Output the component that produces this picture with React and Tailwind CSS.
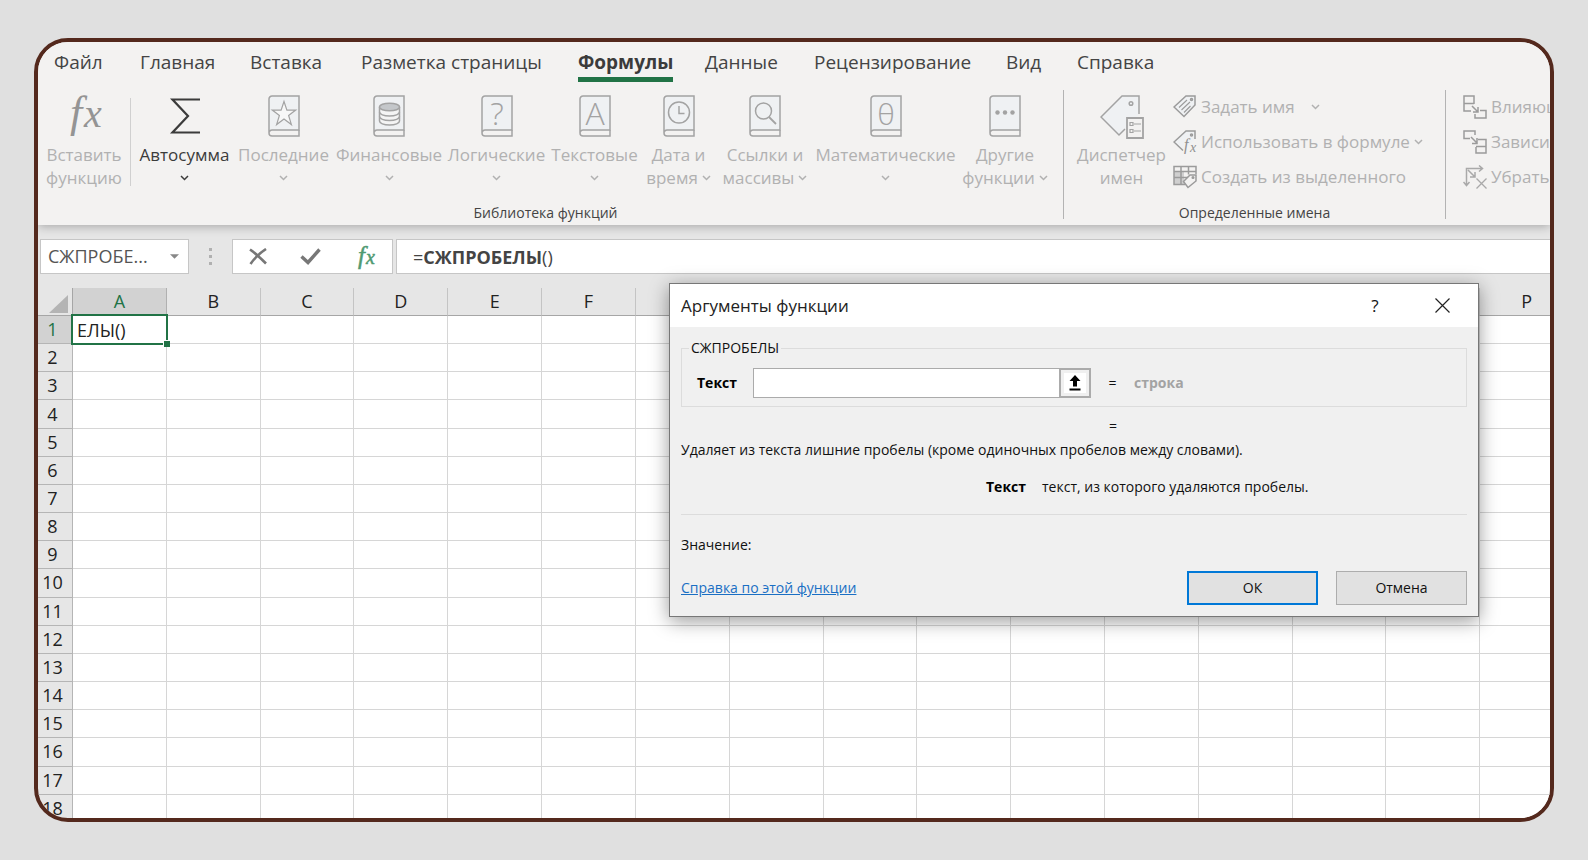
import React from 'react';

// Ribbon tabs
const TABS = [
  { label: 'Файл', width: 'w-[86px]' },
  { label: 'Главная', width: 'w-[110px]' },
  { label: 'Вставка', width: 'w-[111px]' },
  { label: 'Разметка страницы', width: 'w-[217px]' },
  { label: 'Формулы', width: 'w-[127px]', active: true },
  { label: 'Данные', width: 'w-[109px]' },
  { label: 'Рецензирование', width: 'w-[192px]' },
  { label: 'Вид', width: 'w-[71px]' },
  { label: 'Справка', width: 'w-[90px]' },
];

const COLUMNS = 'ABCDEFGHIJKLMNOP'.split('');
const ROWS = Array.from({ length: 18 }, (_, i) => i + 1);

const Chevron = ({ className = '' }) => (
  <svg className={`inline-block shrink-0 ${className}`} width="9" height="6" viewBox="0 0 9 6" fill="none" stroke="currentColor" strokeWidth="1.5">
    <path d="M1 1l3.5 3.5L8 1" />
  </svg>
);

// Closed book with a symbol on its cover
const BookIcon = ({ children }) => (
  <svg width="32" height="42" viewBox="0 0 32 42" fill="none" stroke="#a3a3a3" strokeWidth="1.5">
    <path d="M4 1h27v34H4a3 3 0 0 0-3 3V4a3 3 0 0 1 3-3z" fill="#eff1f3" />
    <path d="M1 38a3 3 0 0 0 3 3h27v-6" />
    {children}
  </svg>
);

const GlyphText = ({ size = 32, children }) => (
  <text x="16" y="30" textAnchor="middle" fontSize={size} fontFamily="Open Sans, sans-serif" fontWeight="300" fill="#a3a3a3" stroke="none">
    {children}
  </text>
);

const FxIcon = () => (
  <svg width="40" height="42" viewBox="0 0 40 42" overflow="visible" fontStyle="italic" fontFamily="Liberation Serif, serif" fill="#949494">
    <text x="6" y="32" fontSize="44">f</text>
    <text x="20" y="32" fontSize="40">x</text>
  </svg>
);

const SigmaIcon = () => (
  <svg width="32" height="42" viewBox="0 0 32 42" fill="none" stroke="#3b3b3b" strokeWidth="2.2">
    <path d="M31 4.500H3.500L19 21 3.500 37.500H31" />
  </svg>
);

const StarIcon = () => (
  <BookIcon>
    <path d="M16 6.500l2.900 8.600h8.800l-7.100 5.300 2.800 9.200-7.400-5.500-7.400 5.500 2.800-9.200-7.100-5.300h8.800z" fill="#f7f7f7" strokeWidth="1.2" />
  </BookIcon>
);

const CoinsIcon = () => (
  <BookIcon>
    <path d="M6.500 12v14c0 2.200 4.200 4 10 4s10-1.800 10-4V12" fill="#f4f4f4" />
    <ellipse cx="16.500" cy="12" rx="10" ry="3.800" fill="#c4c7ca" />
    <path d="M6.500 17c0 2.200 4.200 4 10 4s10-1.800 10-4M6.500 21.500c0 2.200 4.200 4 10 4s10-1.800 10-4" />
  </BookIcon>
);

const ClockIcon = () => (
  <BookIcon>
    <circle cx="16" cy="17.500" r="10.500" />
    <path d="M16 11v7.500h5.500" />
  </BookIcon>
);

const SearchIcon = () => (
  <BookIcon>
    <circle cx="14.500" cy="16" r="8" />
    <path d="M20 22l7 7" strokeWidth="1.800" />
  </BookIcon>
);

const DotsIcon = () => (
  <BookIcon>
    <g fill="#a3a3a3" stroke="none">
      <circle cx="8.500" cy="17.500" r="2.200" />
      <circle cx="16" cy="17.500" r="2.200" />
      <circle cx="23.500" cy="17.500" r="2.200" />
    </g>
  </BookIcon>
);

const NameManagerIcon = () => (
  <svg width="44" height="44" viewBox="0 0 44 44" fill="none" stroke="#a3a3a3" strokeWidth="1.5">
    <path d="M39 19V1H22L1 22l18 18 6-6" fill="#eff1f3" />
    <circle cx="31" cy="8.500" r="1.800" />
    <path d="M27 23h16v20H27z" fill="#f3f2f1" strokeWidth="1.800" />
    <path d="M30 27.500h3v3h-3zM30 34.500h3v3h-3zM34 29h7M34 36h7" strokeWidth="1.200" />
  </svg>
);

const SmallIcon = ({ children }) => (
  <svg className="shrink-0" width="24" height="24" viewBox="0 0 24 24" fill="none" stroke="#9b9b9b" strokeWidth="1.5">
    {children}
  </svg>
);

const TagIcon = () => (
  <SmallIcon>
    <path d="M1 12L13 1h9v9L11 21.500z" fill="#eff1f3" />
    <circle cx="18.500" cy="4.500" r="1" />
    <path d="M6 12.500l8-7.500M8.500 15l8.500-8M11 17.500l6.500-6.500" strokeWidth="1.100" />
  </SmallIcon>
);

const TagFxIcon = () => (
  <SmallIcon>
    <path d="M22 9V1h-9L1 12l9 8.500" fill="#eff1f3" />
    <circle cx="18.500" cy="5" r="1" />
    <g fontStyle="italic" fontFamily="Liberation Serif, serif" fill="#8f8f8f" stroke="none">
      <text x="11" y="20" fontSize="16">f</text>
      <text x="17" y="22" fontSize="14">x</text>
    </g>
  </SmallIcon>
);

const TableTagIcon = () => (
  <SmallIcon>
    <path d="M1 7h10v12H1z" fill="#cfcfcf" stroke="none" />
    <path d="M1 1.500h22v5H1zM1 6.500v13h11M1 12.500h14M8 1.500v18M15.500 1.500v8M23 6v3" />
    <path d="M10.500 16.500L17 10h6v6l-8 6.500z" fill="#f3f2f1" />
    <circle cx="20" cy="12.500" r=".8" />
  </SmallIcon>
);

const PrecedentsIcon = () => (
  <SmallIcon>
    <path d="M8 16H1V1h10v8M1 8.500h10M17 15.500h6V23H12v-4M9 11l6 6M15 12v5h-5" />
  </SmallIcon>
);

const DependentsIcon = () => (
  <SmallIcon>
    <path d="M7 8.500H1V1h11v4M15 9.500h8V23H13v-6M13 16.500h10M8 7l6 6M14 8v5.500H9" />
  </SmallIcon>
);

const RemoveArrowsIcon = () => (
  <SmallIcon>
    <path d="M3.500 20V3.500H19M16 .5l3.500 3L16 6.500M.5 17l3 3.500 3-3.500M5 5l7 7M12 7v5H7" stroke="#a9a9a9" />
    <path d="M13.500 13.500l10 10M23.500 13.500l-10 10" stroke="#a9a9a9" strokeWidth="1.300" />
  </SmallIcon>
);

// Function library buttons
const LIBRARY = [
  { lines: ['Автосумма'], icon: <SigmaIcon />, width: 'w-[99px]', enabled: true },
  { lines: ['Последние'], icon: <StarIcon />, width: 'w-[99px]' },
  { lines: ['Финансовые'], icon: <CoinsIcon />, width: 'w-[112px]' },
  { lines: ['Логические'], icon: <BookIcon><GlyphText>?</GlyphText></BookIcon>, width: 'w-[103px]' },
  { lines: ['Текстовые'], icon: <BookIcon><GlyphText>A</GlyphText></BookIcon>, width: 'w-[93px]' },
  { lines: ['Дата и', 'время'], icon: <ClockIcon />, width: 'w-[75px]' },
  { lines: ['Ссылки и', 'массивы'], icon: <SearchIcon />, width: 'w-[98px]' },
  { lines: ['Математические'], icon: <BookIcon><GlyphText size={30}>θ</GlyphText></BookIcon>, width: 'w-[143px]' },
  { lines: ['Другие', 'функции'], icon: <DotsIcon />, width: 'w-[96px]' },
];

const BigButton = ({ lines, icon, width, enabled, hasMenu = true }) => (
  <button
    className={`
      flex shrink-0 flex-col items-center whitespace-nowrap pt-[11px] text-[17px] leading-[23px]
      ${width} ${enabled ? 'text-[#3b3b3b]' : 'text-[#b1b1b1]'}
    `}
  >
    <span className="flex h-[42px]">{icon}</span>
    <span className="mt-[6px]">{lines[0]}</span>
    <span className="flex h-[23px] items-center gap-1">
      {lines[1]}
      {hasMenu && <Chevron />}
    </span>
  </button>
);

const SmallButton = ({ icon, label, hasMenu, menuGap = '' }) => (
  <button className="flex h-[35px] items-center gap-1 whitespace-nowrap text-[17px] text-[#b1b1b1]">
    {icon}
    <span>{label}</span>
    {hasMenu && <Chevron className={menuGap} />}
  </button>
);

const RibbonGroup = ({ title, className = '', children }) => (
  <div className={`flex shrink-0 flex-col justify-between ${className}`}>
    <div className="flex">{children}</div>
    <div className="mb-[2px] text-center text-[14px] leading-5 text-[#444]">{title}</div>
  </div>
);

const GroupDivider = () => <div className="mt-[6px] mb-[6px] w-px shrink-0 bg-[#b3b3b3]" />;

const Ribbon = () => (
  <header className="relative z-10 shrink-0 bg-[#f3f2f1] shadow-[0_1px_10px_rgba(0,0,0,0.3)]">
    <nav className="flex h-[42px] pl-[16px] text-[19px] text-[#444]">
      {TABS.map(tab => (
        <div key={tab.label} className={`shrink-0 ${tab.width}`}>
          <button
            className={`
              h-[40px] whitespace-nowrap
              ${tab.active ? 'border-b-[5px] border-[#217346] pt-[5px] font-bold text-[#3b3b3b]' : ''}
            `}
          >
            {tab.label}
          </button>
        </div>
      ))}
    </nav>
    <div className="flex h-[141px]">
      <RibbonGroup title="Библиотека функций" className="pr-[10px]">
        <BigButton lines={['Вставить', 'функцию']} icon={<FxIcon />} width="w-[92px]" hasMenu={false} />
        <div className="mt-[14px] mr-1 h-[88px] w-px shrink-0 bg-[#d0d0d0]" />
        {LIBRARY.map(item => <BigButton key={item.lines[0]} {...item} />)}
      </RibbonGroup>
      <GroupDivider />
      <RibbonGroup title="Определенные имена" className="w-[381px]">
        <div className="flex pl-[6px]">
          <BigButton lines={['Диспетчер', 'имен']} icon={<NameManagerIcon />} width="w-[103px]" hasMenu={false} />
          <div className="flex flex-col pt-[5px]">
            <SmallButton icon={<TagIcon />} label="Задать имя" hasMenu menuGap="ml-3" />
            <SmallButton icon={<TagFxIcon />} label="Использовать в формуле" hasMenu />
            <SmallButton icon={<TableTagIcon />} label="Создать из выделенного" />
          </div>
        </div>
      </RibbonGroup>
      <GroupDivider />
      <div className="flex flex-col pt-[5px] pl-[17px]">
        <SmallButton icon={<PrecedentsIcon />} label="Влияющие ячейки" />
        <SmallButton icon={<DependentsIcon />} label="Зависимые ячейки" />
        <SmallButton icon={<RemoveArrowsIcon />} label="Убрать стрелки" />
      </div>
    </div>
  </header>
);

const FormulaBar = () => (
  <div className="flex h-[49px] shrink-0 items-end text-[18px] text-[#444]">
    <div className="relative ml-[2px] w-[149px]">
      <select
        aria-label="Имя"
        className="h-[35px] w-full appearance-none border border-[#c6c6c6] bg-white pl-[7px] text-[#555] outline-none"
      >
        <option>СЖПРОБЕ...</option>
      </select>
      <svg className="pointer-events-none absolute top-[15px] right-[10px]" width="9" height="5" viewBox="0 0 10 5" fill="#888">
        <path d="M0 0h10L5 5z" />
      </svg>
    </div>
    <div className="flex h-[35px] w-[43px] flex-col items-center justify-center gap-1">
      <i className="size-[3px] bg-[#b0b0b0]" />
      <i className="size-[3px] bg-[#b0b0b0]" />
      <i className="size-[3px] bg-[#b0b0b0]" />
    </div>
    <div className="flex h-[35px] w-[161px] items-center justify-around border border-[#c6c6c6] bg-white">
      <button aria-label="Отмена ввода">
        <svg width="19" height="17" viewBox="0 0 19 17" fill="none" stroke="#777" strokeWidth="2.600">
          <path d="M1 1.500c5 3.500 10.500 8.500 16 14M17 1C11 5 5.500 10 1.500 16" />
        </svg>
      </button>
      <button aria-label="Ввод">
        <svg width="21" height="17" viewBox="0 0 21 17" fill="none" stroke="#777" strokeWidth="3.400">
          <path d="M1.500 8.500L8 14.500 19.500 1.500" />
        </svg>
      </button>
      <button aria-label="Вставить функцию">
        <svg width="22" height="26" viewBox="0 0 22 26" fontStyle="italic" fontFamily="Liberation Serif, serif" fill="#4f9a72" stroke="#4f9a72" strokeWidth=".5">
          <text x="4" y="20" fontSize="25">f</text>
          <text x="12" y="20" fontSize="20">x</text>
        </svg>
      </button>
    </div>
    <div
      role="textbox"
      aria-label="Строка формул"
      contentEditable
      suppressContentEditableWarning
      className="ml-[3px] h-[35px] flex-1 border-y border-l border-[#c6c6c6] bg-white pl-[16px] leading-[34px] outline-none"
    >
      =<b>СЖПРОБЕЛЫ</b>()
    </div>
  </div>
);

const Sheet = () => (
  <div className="mt-[14px] min-h-0 flex-1 overflow-hidden">
    <table className="h-[535px] w-[1536px] table-fixed border-separate border-spacing-0 text-[18px] text-[#222]">
      <thead>
        <tr className="h-[28px]">
          <th className="w-[35px] border-r border-b border-[#a6a6a6] p-0">
            <svg className="mt-1 mr-1 ml-auto" width="19" height="18" viewBox="0 0 19 18" fill="#b4b4b4">
              <path d="M19 0v18H0z" />
            </svg>
          </th>
          {COLUMNS.map(col => (
            <th
              key={col}
              className={`
                border-r border-b p-0 font-normal leading-[27px]
                ${col === 'A' ? 'border-r-[#b0b0b0] border-b-[#217346] bg-[#d2d2d2] text-[#217346]' : 'border-r-[#c4c4c4] border-b-[#a6a6a6]'}
              `}
            >
              {col}
            </th>
          ))}
        </tr>
      </thead>
      <tbody>
        {ROWS.map(row => (
          <tr key={row}>
            <th
              className={`
                border-r border-b border-[#b5b5b5] p-0 pr-[5px] font-normal leading-[27px]
                ${row === 1 ? 'bg-[#d2d2d2] text-[#217346]' : ''}
              `}
            >
              {row}
            </th>
            {COLUMNS.map(col => (
              <td key={col} className="relative border-r border-b border-[#d6d6d6] bg-white p-0 leading-[27px]">
                {row === 1 && col === 'A' && (
                  <div className="absolute -inset-[2px] z-10 border-2 border-[#217346] bg-white pl-[4px] leading-[28px]">
                    ЕЛЫ()
                    <i className="absolute -right-[4px] -bottom-[4px] size-[7px] border-t border-l border-white bg-[#217346]" />
                  </div>
                )}
              </td>
            ))}
          </tr>
        ))}
      </tbody>
    </table>
  </div>
);

const ArgumentsDialog = () => (
  <div
    role="dialog"
    aria-label="Аргументы функции"
    className="absolute top-[241px] left-[631px] z-20 w-[810px] border border-[#777] bg-[#f0f0f0] text-[14px] leading-5 text-[#111] shadow-[0_4px_18px_rgba(0,0,0,0.4)]"
  >
    <div className="flex h-[43px] items-center bg-white pl-[11px]">
      <h2 className="flex-1 text-[17px] text-[#222]">Аргументы функции</h2>
      <button aria-label="Помощь" className="w-[62px] text-[17px]">?</button>
      <button aria-label="Закрыть" className="flex w-[72px] justify-center">
        <svg width="15" height="15" viewBox="0 0 15 15" stroke="#222" strokeWidth="1.200">
          <path d="M.5.500l14 14M14.500.500l-14 14" />
        </svg>
      </button>
    </div>
    <div className="px-[11px] pt-[11px] pb-[11px]">
      <fieldset className="h-[69px] border border-[#dcdcdc] pl-[15px]">
        <legend className="-ml-[8px] px-[2px]">СЖПРОБЕЛЫ</legend>
        <div className="flex items-center pt-[10px]">
          <label htmlFor="arg-text" className="w-[56px] font-bold text-black">Текст</label>
          <div className="flex h-[30px] w-[338px]">
            <input id="arg-text" type="text" className="min-w-0 flex-1 border border-r-0 border-[#ababab] bg-white px-1 outline-none" />
            <button aria-label="Свернуть" className="flex w-[32px] items-center justify-center border-2 border-[#ababab] bg-[#f0f0f0] p-[3px]">
              <span className="flex h-full w-full items-center justify-center bg-white">
                <svg width="12" height="16" viewBox="0 0 12 16">
                  <path d="M6 0l5.500 6H8v5.500H4V6H.5zM.5 13.500h11v2H.5z" fill="#000" />
                </svg>
              </span>
            </button>
          </div>
          <span className="w-[43px] text-center">=</span>
          <span className="font-bold text-[#a3a3a3]">строка</span>
        </div>
      </fieldset>
      <div className="mt-[9px] pl-[428px]">=</div>
      <p className="mt-[4px]">Удаляет из текста лишние пробелы (кроме одиночных пробелов между словами).</p>
      <p className="mt-[17px] flex gap-4 pl-[305px]">
        <b className="text-black">Текст</b>
        <span>текст, из которого удаляются пробелы.</span>
      </p>
      <hr className="mt-[17px] border-[#dcdcdc]" />
      <p className="mt-[20px]">Значение:</p>
      <div className="mt-[16px] flex items-center">
        <a href="#help" className="flex-1 text-[#1a6fc4] underline">Справка по этой функции</a>
        <button className="h-[34px] w-[131px] border-2 border-[#0078d7] bg-[#e1e1e1]">ОК</button>
        <button className="ml-[18px] h-[34px] w-[131px] border border-[#adadad] bg-[#e1e1e1]">Отмена</button>
      </div>
    </div>
  </div>
);

const App = () => (
  <div className="flex h-screen bg-[#e0e0e0] px-[34px] py-[38px] font-['Open_Sans','Noto_Sans',sans-serif]">
    <main className="relative flex min-w-0 flex-1 flex-col overflow-hidden rounded-[34px] border-4 border-[#54291d] bg-[#e6e6e6]">
      <Ribbon />
      <FormulaBar />
      <Sheet />
      <ArgumentsDialog />
    </main>
  </div>
);

export default App;
